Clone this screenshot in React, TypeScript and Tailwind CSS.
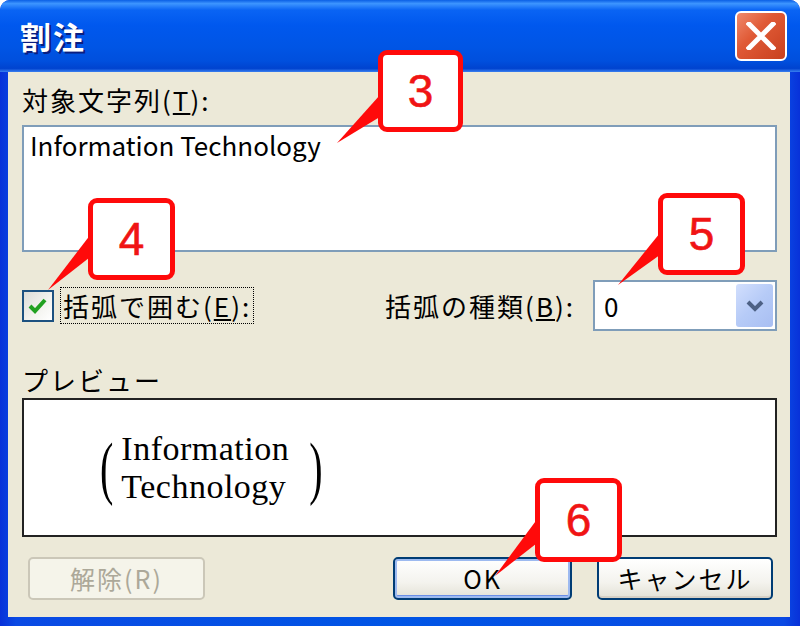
import React from "react";

const jp = "font-['MS_UI_Gothic','Noto_Sans_CJK_JP',sans-serif]";

function Callout({ n, className }: { n: string; className: string }) {
  return (
    <div
      className={`absolute flex items-center justify-center rounded-[9px] border-[5px] border-[#FF0A0A] bg-white ${className}`}
    >
      <span className="font-['Liberation_Sans',Arial,sans-serif] text-[46px] font-normal leading-none text-[#F01414] [-webkit-text-stroke:0.6px_#F01414]">
        {n}
      </span>
    </div>
  );
}

function XpButton({
  label,
  variant = "normal",
  className = "",
}: {
  label: React.ReactNode;
  variant?: "normal" | "default" | "disabled";
  className?: string;
}) {
  const styles = {
    normal:
      "border-[#003C74] bg-[linear-gradient(to_bottom,#FFFFFF_0%,#F4F3EE_60%,#E3E1D6_100%)] text-black shadow-[inset_0_-2px_0_#D6D0C5]",
    default:
      "border-[#003C74] bg-[linear-gradient(to_bottom,#FFFFFF_0%,#F4F3EE_60%,#E3E1D6_100%)] text-black shadow-[inset_0_0_0_2px_#9DBAF0,inset_0_-3px_0_#6A8DE6]",
    disabled: "border-[#CBC7B8] bg-[#F5F4EA] text-[#ACA899]",
  }[variant];
  return (
    <div
      className={`flex h-[43px] items-center justify-center rounded-[5px] border-2 ${jp} text-[25px] tracking-[2px] ${styles} ${className}`}
    >
      {label}
    </div>
  );
}

function Paren({ ch, className = "" }: { ch: string; className?: string }) {
  return (
    <span
      className={`inline-block font-['Liberation_Serif',serif] text-[40px] leading-none text-black [transform:scaleY(1.75)] ${className}`}
    >
      {ch}
    </span>
  );
}

export default function App() {
  return (
    <div className="relative h-[626px] w-[800px] overflow-hidden bg-white">
      <div className="flex h-full w-full flex-col rounded-t-[10px] bg-[linear-gradient(to_right,#0831D9_0%,#0A4AE4_2%,#0055E5_50%,#0A4AE4_98%,#0831D9_100%)]">
        {/* title bar */}
        <div className="flex h-[72px] shrink-0 items-center justify-between rounded-t-[10px] bg-[linear-gradient(to_bottom,#0A5FE5_0%,#3D95FF_5%,#0A64F4_14%,#0058EE_35%,#0055E5_65%,#004FDD_85%,#0043CF_95%,#3A7FF0_100%)] pl-[20px] pr-[13px]">
          <span className={`${jp} text-[31px] font-bold tracking-[2px] text-white [text-shadow:2px_2px_0_#0A1E80]`}>
            割注
          </span>
          <div className="flex h-[50px] w-[52px] items-center justify-center rounded-[6px] border-2 border-white bg-[linear-gradient(135deg,#F08A6C_0%,#E05A36_40%,#C8401E_100%)]">
            <svg width="30" height="28" viewBox="0 0 30 28">
              <path d="M3 2 L27 26 M27 2 L3 26" stroke="white" strokeWidth="5" strokeLinecap="square" />
            </svg>
          </div>
        </div>

        {/* body */}
        <div className={`ml-[8px] mr-[10px] mb-[9px] flex flex-1 flex-col bg-[#ECE9D8] pl-[14px] pr-[13px] pt-[12px] ${jp} text-black`}>
          <div className="h-[32px] text-[26px] leading-[32px] tracking-[2px]">
            対象文字列(<u>T</u>):
          </div>
          <div className="mt-[9px] h-[127px] border-2 border-[#7F9DB9] bg-white px-[6px] pt-[2px]">
            <span className="font-['Noto_Sans_CJK_JP',sans-serif] text-[26px] leading-[32px]">
              Information Technology
            </span>
          </div>

          <div className="mt-[28px] flex h-[51px] items-center">
            <div className="flex h-[32px] w-[32px] items-center justify-center border-2 border-[#1C5180] bg-[linear-gradient(135deg,#DCDCD7_0%,#F4F4F0_60%,#FFFFFF_100%)]">
              <svg width="20" height="18" viewBox="0 0 20 18">
                <path d="M2 9 L7 14 L17 3" fill="none" stroke="#21A121" strokeWidth="4" />
              </svg>
            </div>
            <div className="ml-[6px] flex h-[37px] items-center border border-dotted border-black px-[2px] text-[26px] tracking-[2px]">
              括弧で囲む(<u>E</u>):
            </div>
            <div className="ml-auto mr-[18px] text-[26px] tracking-[2px]">
              括弧の種類(<u>B</u>):
            </div>
            <div className="flex h-[51px] w-[184px] items-center border-2 border-[#7F9DB9] bg-white pl-[9px] pr-[2px]">
              <span className="flex-1 text-[26px]">0</span>
              <div className="flex h-[43px] w-[37px] items-center justify-center rounded-[3px] bg-[linear-gradient(135deg,#D2DFFD_0%,#B6CBF7_50%,#A8BEF2_100%)]">
                <svg width="18" height="12" viewBox="0 0 18 12">
                  <path d="M2 2 L9 9 L16 2" fill="none" stroke="#4D6185" strokeWidth="4" />
                </svg>
              </div>
            </div>
          </div>

          <div className="mt-[33px] h-[34px] text-[26px] leading-[32px] tracking-[2px]">プレビュー</div>
          <div className="h-[139px] border-2 border-[#222] bg-white">
            <div className="flex h-full items-center pl-[76px]">
              <Paren ch="(" />
              <div className="ml-[8px] flex flex-col font-['Liberation_Serif',serif] text-[34px] leading-[38px] tracking-[0.5px]">
                <span>Information</span>
                <span>Technology</span>
              </div>
              <Paren ch=")" className="ml-[20px]" />
            </div>
          </div>

          <div className="mt-[20px] flex items-center pl-[6px] pr-[4px]">
            <XpButton label="解除(R)" variant="disabled" className="w-[177px]" />
            <XpButton label="OK" variant="default" className="ml-auto w-[179px]" />
            <XpButton label="キャンセル" className="ml-[25px] w-[176px]" />
          </div>
        </div>
      </div>

      {/* callout pointers */}
      <svg className="pointer-events-none absolute left-0 top-0" width="800" height="626">
        <polygon points="388,86 388,112 337,143" fill="#FF0A0A" />
        <polygon points="94,230 94,254 48,290" fill="#FF0A0A" />
        <polygon points="664,228 664,252 618,285" fill="#FF0A0A" />
        <polygon points="541,514 541,540 495,576" fill="#FF0A0A" />
      </svg>
      <Callout n="3" className="left-[378px] top-[50px] h-[82px] w-[85px]" />
      <Callout n="4" className="left-[88px] top-[198px] h-[82px] w-[87px]" />
      <Callout n="5" className="left-[658px] top-[193px] h-[82px] w-[87px]" />
      <Callout n="6" className="left-[535px] top-[478px] h-[84px] w-[87px]" />
    </div>
  );
}
